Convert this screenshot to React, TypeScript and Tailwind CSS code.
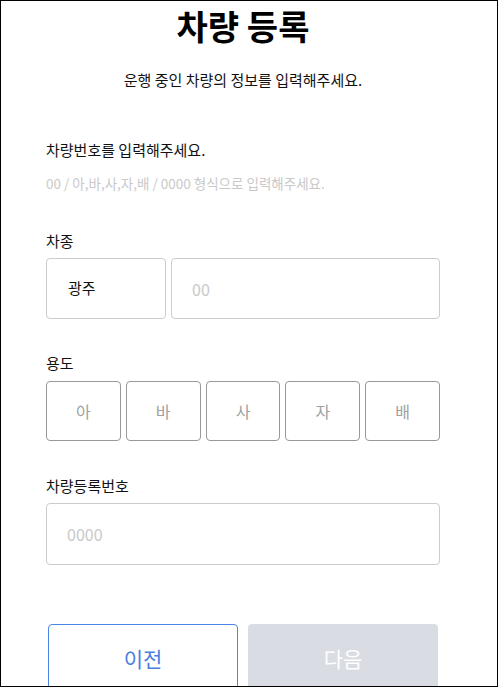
import React from 'react';

const font = { fontFamily: '"Noto Sans CJK KR", "Noto Sans", sans-serif' };

const usages = ['아', '바', '사', '자', '배'];

export default function App() {
  return (
    <div
      className="h-screen w-full overflow-hidden border border-black bg-white text-[#111]"
      style={font}
    >
      <div className="ml-[45px] w-[394px]">
        {/* Header */}
        <h1 className="text-center text-[34px] font-bold leading-[50px] text-black">
          차량 등록
        </h1>
        <p className="mt-[19px] text-center text-[15px] leading-[20px]">
          운행 중인 차량의 정보를 입력해주세요.
        </p>

        {/* Plate guide */}
        <p className="mt-[50px] text-[15px] leading-[20px]">차량번호를 입력해주세요.</p>
        <p className="mt-[13px] text-[13.5px] leading-[20px] text-[#c9c9c9]">
          00 / 아,바,사,자,배 / 0000 형식으로 입력해주세요.
        </p>

        {/* Car type */}
        <label className="mt-[38px] block text-[15px] leading-[20px]">차종</label>
        <div className="mt-[7px] flex gap-[5px]">
          <div className="flex h-[61px] w-[120px] items-center rounded-[4px] border border-[#cccccc] pl-[21px] text-[15px]">
            광주
          </div>
          <input
            placeholder="00"
            className="h-[61px] flex-1 rounded-[4px] border border-[#cccccc] pl-[20px] text-[16px] outline-none placeholder:text-[#c9c9c9]"
          />
        </div>

        {/* Usage */}
        <label className="mt-[34px] block text-[15px] leading-[20px]">용도</label>
        <div className="mt-[8px] grid grid-cols-5 gap-[5px]">
          {usages.map((u) => (
            <button
              key={u}
              className="flex h-[60px] items-center justify-center rounded-[4px] border border-[#999999] text-[16px] text-[#a0a0a0]"
            >
              {u}
            </button>
          ))}
        </div>

        {/* Registration number */}
        <label className="mt-[35px] block text-[15px] leading-[20px]">차량등록번호</label>
        <input
          placeholder="0000"
          className="mt-[7px] h-[62px] w-full rounded-[4px] border border-[#cccccc] pl-[20px] text-[16px] outline-none placeholder:text-[#c9c9c9]"
        />

        {/* Actions */}
        <div className="mt-[59px] flex gap-[10px] px-[2px]">
          <button className="h-[70px] w-[190px] rounded-[4px] border border-[#4a86e8] bg-white text-[21px] text-[#4a7ee0]">
            이전
          </button>
          <button className="h-[70px] w-[190px] rounded-[4px] bg-[#d9dce3] text-[21px] text-white">
            다음
          </button>
        </div>
      </div>
    </div>
  );
}
